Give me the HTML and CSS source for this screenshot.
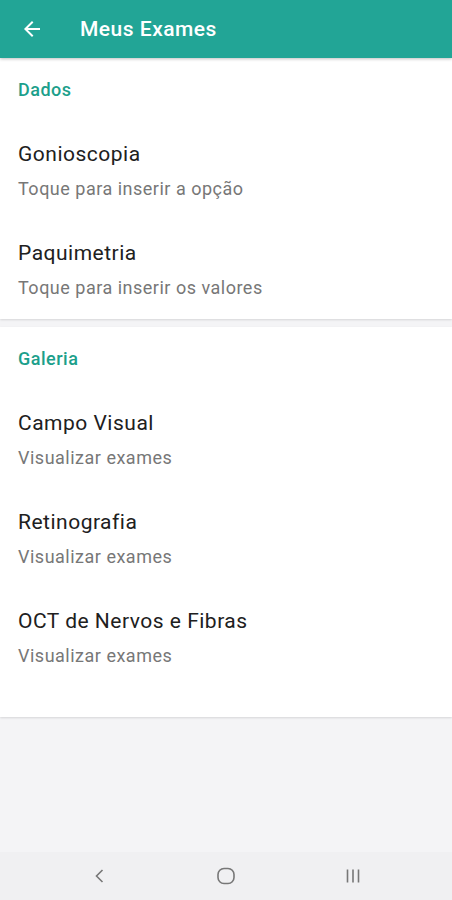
FILE: index.html
```html
<html>
<head>
    <meta charset="UTF-8">
    <meta name="viewport" content="width=device-width, initial-scale=1.0">
    <title>Meus Exames</title>
    <link rel="stylesheet" href="styles.css">
</head>
<body>
    <div class="app">
        <header class="toolbar">
            <svg class="back" width="24" height="24" viewBox="0 0 24 24">
                <path d="M20 11H7.83l5.59-5.59L12 4l-8 8 8 8 1.41-1.41L7.83 13H20v-2z" fill="#fff"/>
            </svg>
            <h1>Meus Exames</h1>
        </header>

        <main class="content">
            <section class="card">
                <h2 class="category">Dados</h2>
                <div class="pref">
                    <div class="pref-title">Gonioscopia</div>
                    <div class="pref-summary">Toque para inserir a opção</div>
                </div>
                <div class="pref">
                    <div class="pref-title">Paquimetria</div>
                    <div class="pref-summary">Toque para inserir os valores</div>
                </div>
            </section>

            <section class="card card-last">
                <h2 class="category">Galeria</h2>
                <div class="pref">
                    <div class="pref-title">Campo Visual</div>
                    <div class="pref-summary">Visualizar exames</div>
                </div>
                <div class="pref">
                    <div class="pref-title">Retinografia</div>
                    <div class="pref-summary">Visualizar exames</div>
                </div>
                <div class="pref">
                    <div class="pref-title">OCT de Nervos e Fibras</div>
                    <div class="pref-summary">Visualizar exames</div>
                </div>
            </section>
        </main>

        <!-- system navigation bar -->
        <nav class="navbar">
            <svg width="20" height="20" viewBox="0 0 20 20">
                <path d="M12.5 4 L6.5 10 L12.5 16" fill="none" stroke="#777" stroke-width="1.6"/>
            </svg>
            <svg width="22" height="20" viewBox="0 0 22 20">
                <rect x="3" y="2.5" width="16" height="15" rx="6" fill="none" stroke="#777" stroke-width="1.6"/>
            </svg>
            <svg width="22" height="20" viewBox="0 0 22 20">
                <path d="M5.5 3.5v13M11 3.5v13M16.5 3.5v13" stroke="#777" stroke-width="1.6"/>
            </svg>
        </nav>
    </div>
</body>
</html>
```

FILE: styles.css
```css
body { margin: 0; font-family: Roboto, "Noto Sans", sans-serif; background: #f4f4f6; }
.app { display: flex; flex-direction: column; height: 900px; }
.toolbar { display: flex; align-items: center; height: 58px; background: #22a596; box-shadow: 0 1px 3px rgba(0,0,0,0.25); position: relative; z-index: 2; }
.toolbar .back { margin-left: 20px; }
.toolbar h1 { margin: 0 0 0 36px; font-size: 21px; font-weight: 500; color: #fff; letter-spacing: 0.5px; }
.content { flex: 1; display: flex; flex-direction: column; gap: 8px; }
.card { background: #fff; box-shadow: 0 1px 2px rgba(0,0,0,0.12); }
.card-last { padding-bottom: 30px; }
.category { margin: 0; padding: 20px 18px 19px; font-size: 18px; line-height: 24px; font-weight: 500; color: #1c9f8b; letter-spacing: 0.5px; }
.pref { padding: 20px 18px 19px; }
.pref-title { font-size: 21px; line-height: 26px; color: #202020; letter-spacing: 0.5px; }
.pref-summary { margin-top: 10px; font-size: 18px; line-height: 24px; color: #777; letter-spacing: 0.5px; }
.navbar { display: flex; justify-content: space-between; align-items: center; height: 48px; background: #f0f0f2; padding: 0 88px 0 90px; }
```
